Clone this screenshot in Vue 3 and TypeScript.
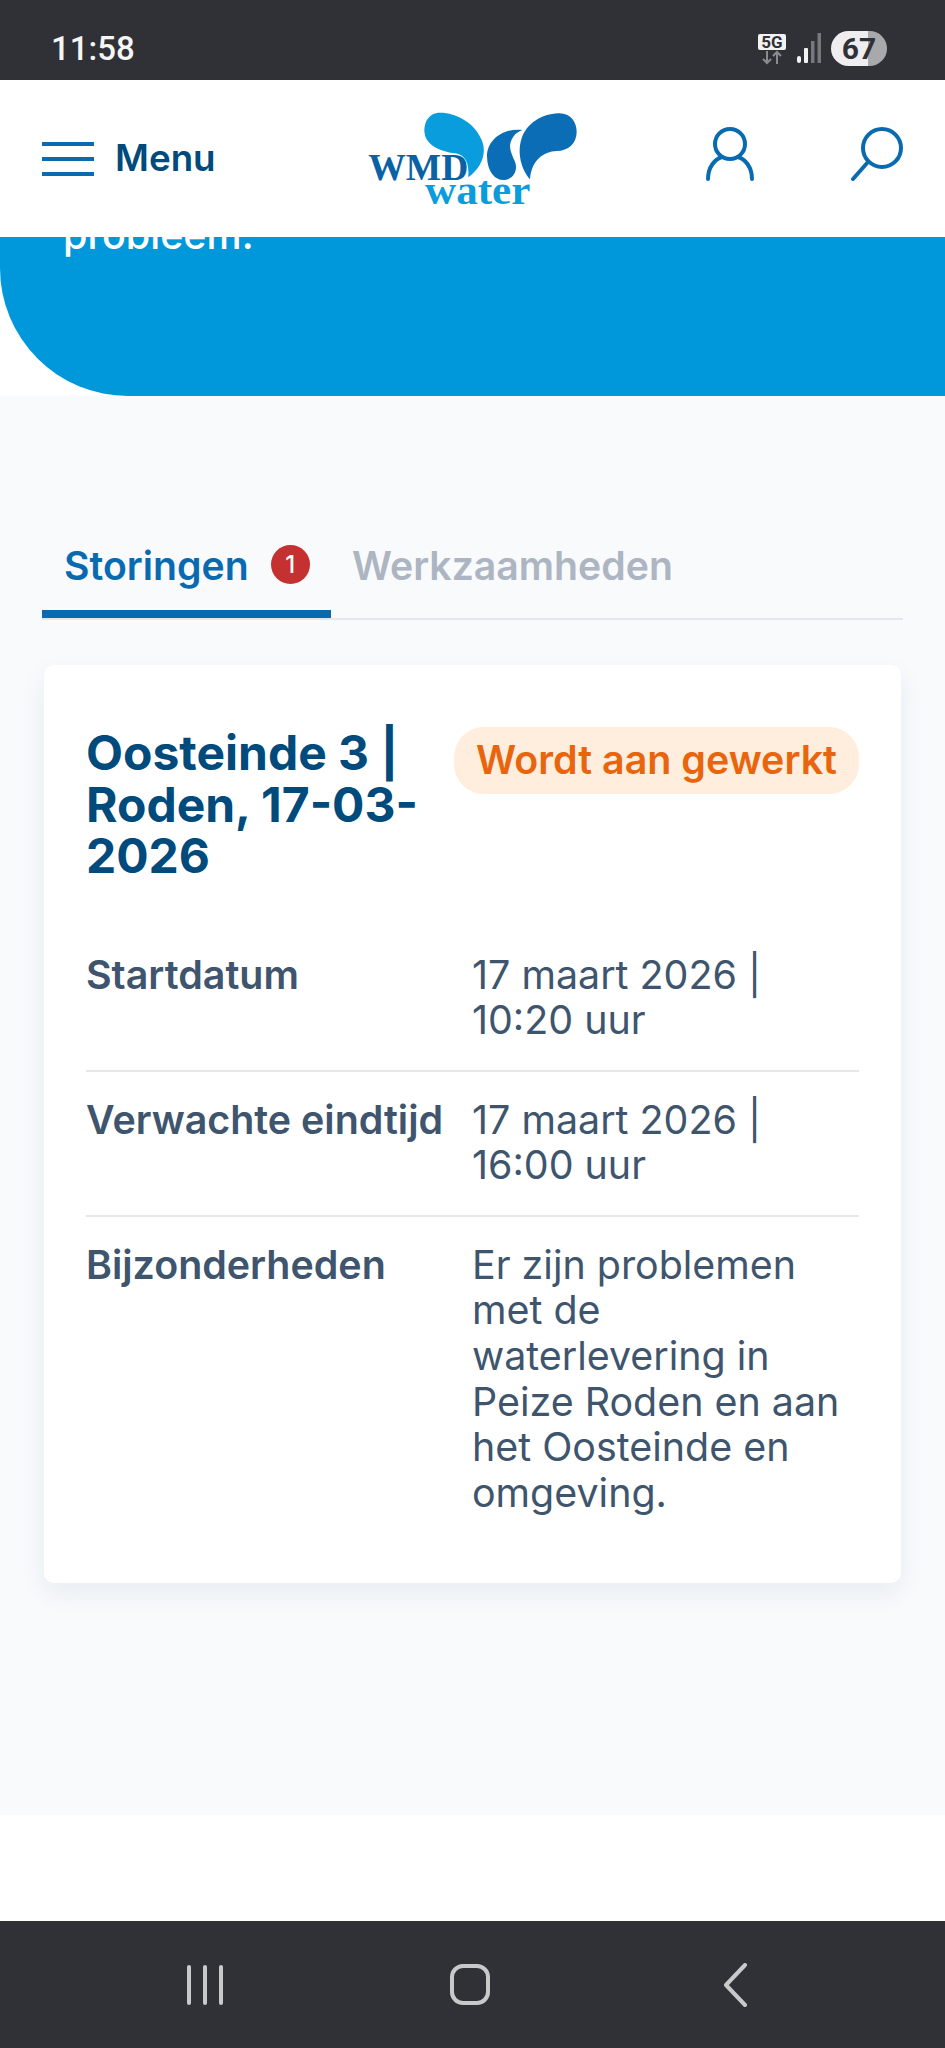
<script setup lang="ts">
interface DetailRow {
  label: string;
  value: string;
}

const rows: DetailRow[] = [
  { label: "Startdatum", value: "17 maart 2026 | 10:20 uur" },
  { label: "Verwachte eindtijd", value: "17 maart 2026 | 16:00 uur" },
  {
    label: "Bijzonderheden",
    value: "Er zijn problemen met de waterlevering in Peize Roden en aan het Oosteinde en omgeving.",
  },
];
</script>

<template>
  <div class="screen">
    <div class="status-bar">
      <span class="time">11:58</span>
      <div class="status-icons">
        <div class="net">
          <span class="net-label">5G</span>
          <svg class="net-arrows" width="28" height="15" viewBox="0 0 28 15" fill="none" stroke="#8b8c8f" stroke-width="2">
            <path d="M9 1v12M5 9l4 4 4-4" />
            <path d="M19 14V2M15 6l4-4 4 4" />
          </svg>
        </div>
        <svg class="signal" width="24" height="30" viewBox="0 0 24 30">
          <rect x="0" y="23" width="4" height="7" rx="2" fill="#f2f2f2" />
          <rect x="7" y="15" width="4" height="15" rx="1" fill="#f2f2f2" />
          <rect x="14" y="8" width="3.5" height="22" fill="#77787b" />
          <rect x="20.5" y="0" width="3.5" height="30" fill="#77787b" />
        </svg>
        <div class="battery"><span>67</span></div>
      </div>
    </div>

    <header class="site-header">
      <div class="menu">
        <div class="burger"><i></i><i></i><i></i></div>
        <span>Menu</span>
      </div>
      <svg class="logo" width="260" height="130" viewBox="0 0 780 390">
        <path fill="#0a9ddd" d="M300 68C265 68 250 100 254 130C258 165 300 185 345 190C375 195 388 215 385 262C425 232 442 190 425 150C405 100 350 68 300 68Z" />
        <path fill="#0a6db6" d="M548 120C490 112 440 150 441 200C442 245 465 270 490 270C520 270 535 240 525 215C515 190 500 170 520 140C527 130 538 123 548 120Z" />
        <path fill="#0a6db6" d="M655 70C690 68 710 95 710 125C710 160 685 182 650 183C610 185 575 210 570 268C545 240 530 190 545 145C560 100 605 72 655 70Z" />
        <text x="85" y="270" class="logo-wmd" textLength="300" lengthAdjust="spacingAndGlyphs">WMD</text>
        <text x="255" y="342" class="logo-water" textLength="316" lengthAdjust="spacingAndGlyphs">water</text>
      </svg>
      <div class="header-icons">
        <svg width="48" height="54" viewBox="0 0 48 54" fill="none" stroke="#0a6ab0" stroke-width="4" stroke-linecap="round">
          <circle cx="24" cy="17" r="15" />
          <path d="M2 52C2 40 9 32 16 30M46 52C46 40 39 32 32 30" />
        </svg>
        <svg width="52" height="54" viewBox="0 0 52 54" fill="none" stroke="#0a6ab0" stroke-width="4" stroke-linecap="round">
          <circle cx="31" cy="21" r="19" />
          <path d="M17 35L2 52" />
        </svg>
      </div>
    </header>

    <section class="hero">
      <p>probleem.</p>
    </section>

    <main class="content">
      <nav class="tabs">
        <div class="tab active">
          <span>Storingen</span>
          <b class="count">1</b>
        </div>
        <div class="tab">Werkzaamheden</div>
      </nav>

      <article class="card">
        <div class="card-head">
          <h2>Oosteinde 3 | Roden, 17-03-2026</h2>
          <span class="state">Wordt aan gewerkt</span>
        </div>
        <div v-for="row in rows" :key="row.label" class="row">
          <div class="label">{{ row.label }}</div>
          <div class="value">{{ row.value }}</div>
        </div>
      </article>
    </main>

    <div class="page-end"></div>

    <div class="nav-bar">
      <div class="recents"><i></i><i></i><i></i></div>
      <div class="home"></div>
      <svg width="24" height="44" viewBox="0 0 24 44" fill="none" stroke="#c9c9cb" stroke-width="4" stroke-linecap="round" stroke-linejoin="round">
        <path d="M22 2L3 22L22 42" />
      </svg>
    </div>
  </div>
</template>

<style>
html,
body {
  margin: 0;
  background: #fff;
}
</style>

<style scoped>
.screen {
  width: 945px;
  height: 2048px;
  display: flex;
  flex-direction: column;
  overflow: hidden;
  font-family: Inter, "Liberation Sans", sans-serif;
  background: #fff;
}

.status-bar {
  height: 80px;
  flex: none;
  box-sizing: border-box;
  padding: 16px 58px 0 51px;
  display: flex;
  align-items: center;
  justify-content: space-between;
  background: #303136;
}
.time {
  font-family: Roboto, sans-serif;
  font-size: 33px;
  font-weight: 500;
  color: #f5f5f5;
}
.status-icons {
  display: flex;
  align-items: center;
}
.net {
  width: 28px;
  display: flex;
  flex-direction: column;
  margin-top: 2px;
}
.net-label {
  height: 16px;
  border-radius: 2px;
  background: #f2f2f2;
  color: #303136;
  font-family: Roboto, sans-serif;
  font-size: 17px;
  font-weight: 700;
  line-height: 16px;
  text-align: center;
}
.signal {
  margin-left: 11px;
}
.battery {
  width: 56px;
  height: 35px;
  margin-left: 10px;
  border-radius: 18px;
  background: linear-gradient(to right, #eeeef0 66%, #a9a9ab 66%);
  color: #303136;
  font-family: Roboto, sans-serif;
  font-size: 30px;
  font-weight: 700;
  line-height: 35px;
  text-align: center;
}

.site-header {
  height: 157px;
  flex: none;
  position: relative;
  z-index: 1;
  box-sizing: border-box;
  padding: 0 42px;
  display: flex;
  align-items: center;
  background: #fff;
}
.menu {
  width: 298px;
  margin-bottom: 3px;
  display: flex;
  align-items: center;
  gap: 21px;
  color: #004a7c;
  font-size: 36.75px;
  font-weight: 600;
}
.burger {
  width: 52px;
  margin-top: 3px;
  display: flex;
  flex-direction: column;
  gap: 11px;
}
.burger i {
  height: 4px;
  background: #0a6ab0;
}
.logo {
  margin-bottom: 7px;
}
.logo-wmd {
  font-family: "Liberation Serif", serif;
  font-size: 112px;
  font-weight: 700;
  fill: #0a62a5;
}
.logo-water {
  font-family: "Liberation Serif", serif;
  font-size: 122px;
  font-weight: 700;
  fill: #0a9ddd;
}
.header-icons {
  margin-left: auto;
  margin-bottom: 9px;
  display: flex;
  align-items: center;
  gap: 97px;
}

.hero {
  height: 159px;
  flex: none;
  box-sizing: border-box;
  padding: 0 63px;
  overflow: hidden;
  border-bottom-left-radius: 128px;
  background: #0098da;
}
.hero p {
  margin: -28px 0 0;
  color: #fff;
  font-size: 39.5px;
  font-weight: 500;
  line-height: 52px;
}

.content {
  flex: 1;
  box-sizing: border-box;
  padding: 148px 42px 0;
  background: #f8fafc;
}
.tabs {
  height: 74px;
  display: flex;
  border-bottom: 2px solid #e5e7eb;
}
.tab {
  padding: 1px 21px 0;
  display: flex;
  align-items: flex-start;
  gap: 22px;
  color: #adb5c2;
  font-size: 39.2px;
  font-weight: 600;
  line-height: 42px;
}
.tab.active {
  width: 289px;
  box-sizing: border-box;
  height: 74px;
  padding-left: 22px;
  border-bottom: 8px solid #0a6ab0;
  color: #0a6ab0;
}
.count {
  width: 39px;
  height: 39px;
  border-radius: 50%;
  background: #c53030;
  color: #fff;
  font-size: 24px;
  font-weight: 500;
  line-height: 39px;
  text-align: center;
}

.card {
  margin: 45px 2px 0;
  box-sizing: border-box;
  padding: 62px 42px 41px;
  border-radius: 10px;
  background: #fff;
  box-shadow: 0 10px 25px rgba(30, 60, 100, 0.07);
}
.card-head {
  margin-bottom: 45px;
  display: flex;
  align-items: flex-start;
  justify-content: space-between;
}
.card-head h2 {
  width: 340px;
  margin: 0;
  color: #004a7c;
  font-size: 48px;
  font-weight: 700;
  line-height: 51.5px;
}
.state {
  height: 67px;
  box-sizing: border-box;
  padding: 0 22px;
  border-radius: 30px;
  background: #ffeedd;
  color: #e8650e;
  font-size: 39.4px;
  font-weight: 600;
  line-height: 67px;
  white-space: nowrap;
}
.row {
  padding: 26px 0;
  display: flex;
  color: #3e556d;
  font-size: 39.4px;
  line-height: 45.6px;
}
.row + .row {
  border-top: 2px solid #e5e7eb;
}
.label {
  width: 386px;
  flex: none;
  box-sizing: border-box;
  font-weight: 600;
  white-space: nowrap;
}
.value {
  flex: 1;
}

.page-end {
  height: 106px;
  flex: none;
  background: #fff;
}

.nav-bar {
  height: 127px;
  flex: none;
  box-sizing: border-box;
  padding-left: 72px;
  display: grid;
  grid-template-columns: repeat(3, 265px);
  align-items: center;
  justify-items: center;
  background: #303136;
}
.recents {
  display: flex;
  gap: 12px;
}
.recents i {
  width: 4px;
  height: 40px;
  border-radius: 2px;
  background: #c9c9cb;
}
.home {
  width: 40px;
  height: 41px;
  box-sizing: border-box;
  border: 4px solid #c9c9cb;
  border-radius: 13px;
}
</style>
